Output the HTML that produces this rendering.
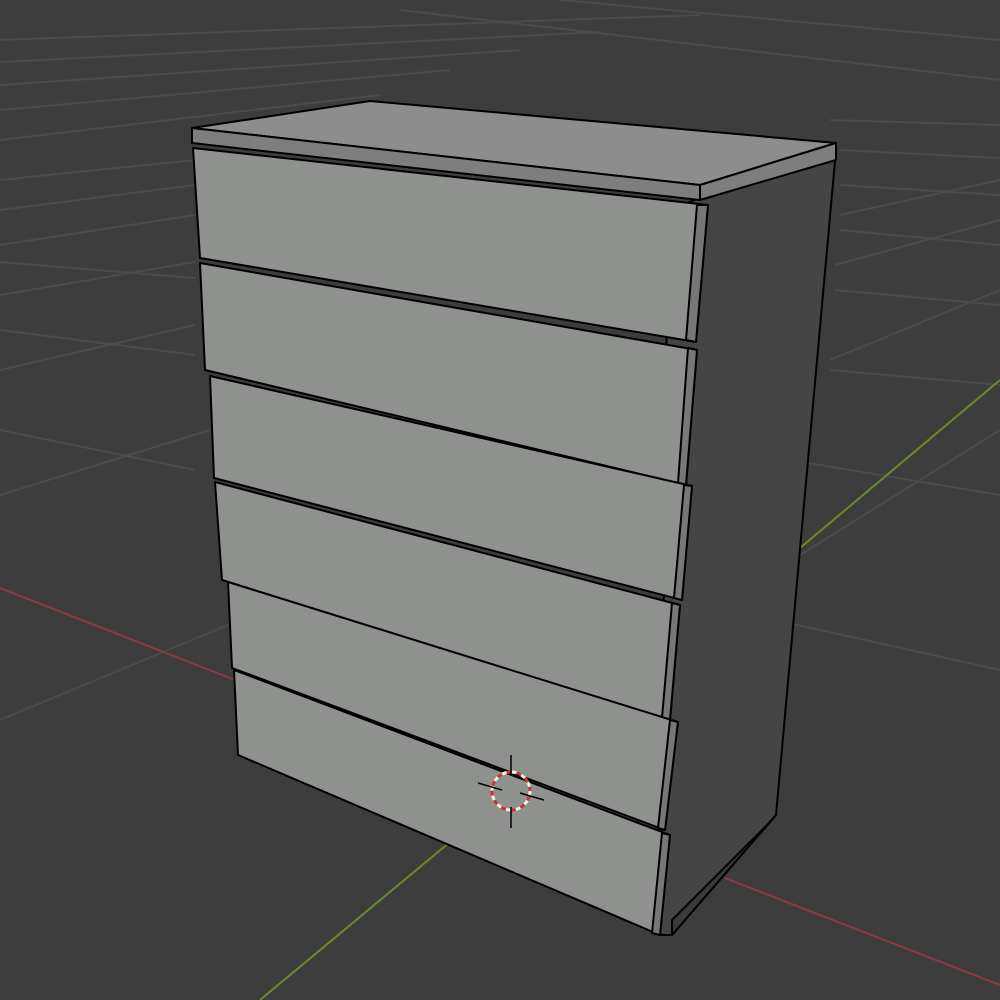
<!DOCTYPE html>
<html><head><style>html,body{margin:0;padding:0;background:#3d3d3d;}svg{display:block}</style></head>
<body>
<svg width="1000" height="1000" viewBox="0 0 1000 1000" xmlns="http://www.w3.org/2000/svg">
<rect width="1000" height="1000" fill="#3d3d3d"/>
<g stroke="#4b4b4b" stroke-width="2" fill="none">
<line x1="0" y1="720" x2="240" y2="620"/>
<line x1="0" y1="495" x2="210" y2="430"/>
<line x1="0" y1="370" x2="195" y2="325"/>
<line x1="0" y1="295" x2="195" y2="262"/>
<line x1="0" y1="245" x2="195" y2="215"/>
<line x1="0" y1="210" x2="195" y2="185"/>
<line x1="0" y1="180" x2="195" y2="160"/>
<line x1="0" y1="140" x2="380" y2="95"/>
<line x1="0" y1="110" x2="450" y2="70"/>
<line x1="0" y1="85" x2="520" y2="50"/>
<line x1="0" y1="62" x2="600" y2="32"/>
<line x1="0" y1="40" x2="700" y2="15"/>
<line x1="800" y1="555" x2="1000" y2="430"/>
<line x1="830" y1="360" x2="1000" y2="290"/>
<line x1="835" y1="265" x2="1000" y2="220"/>
<line x1="840" y1="215" x2="1000" y2="180"/>
<line x1="0" y1="430" x2="195" y2="470"/>
<line x1="0" y1="330" x2="195" y2="355"/>
<line x1="0" y1="262" x2="195" y2="278"/>
<line x1="775" y1="620" x2="1000" y2="670"/>
<line x1="790" y1="460" x2="1000" y2="495"/>
<line x1="830" y1="370" x2="1000" y2="385"/>
<line x1="835" y1="290" x2="1000" y2="305"/>
<line x1="840" y1="230" x2="1000" y2="245"/>
<line x1="840" y1="185" x2="1000" y2="195"/>
<line x1="840" y1="150" x2="1000" y2="158"/>
<line x1="560" y1="0" x2="1000" y2="40"/>
<line x1="400" y1="10" x2="1000" y2="80"/>
<line x1="830" y1="120" x2="1000" y2="125"/>
</g>
<line x1="0" y1="588" x2="235" y2="680" stroke="#8a3b42" stroke-width="2"/>
<line x1="725" y1="878" x2="1000" y2="985" stroke="#8a3b42" stroke-width="2"/>
<line x1="260" y1="1000" x2="450" y2="842" stroke="#6a8a2a" stroke-width="2"/>
<line x1="800" y1="548" x2="1000" y2="380" stroke="#6a8a2a" stroke-width="2"/>
<g stroke="#000" stroke-width="2" stroke-linejoin="round">
<!-- right side -->
<polygon points="700,198 836,150 776,815 672,935 660,935 668,210" fill="#454545"/>
<polygon points="776,815 672,935 672,920 770,822" fill="#3a3a3a"/>
<!-- top -->
<polygon points="192,128 370,101 836,143 700,185" fill="#8c8d8c"/>
<polygon points="192,128 700,185 836,143 836,160 700,200 192,143" fill="#7d7e7d"/>
<line x1="700" y1="185" x2="700" y2="200"/>
<!-- drawers -->
<polygon points="193,148 708,205 696,342 200,258" fill="#8f918f"/>
<polygon points="708,205 697,205 686,340 696,342" fill="#777"/>
<polygon points="200,263 697,350 686,485 205,370" fill="#8f918f"/>
<polygon points="697,350 688,348 678,483 686,485" fill="#777"/>
<polygon points="210,376 692,486 682,600 214,478" fill="#8f918f"/>
<polygon points="692,486 684,485 674,598 682,600" fill="#777"/>
<polygon points="215,482 680,605 670,720 222,580" fill="#8f918f"/>
<polygon points="680,605 672,603 662,718 670,720" fill="#777"/>
<polygon points="228,582 678,722 665,830 232,668" fill="#8f918f"/>
<polygon points="678,722 670,720 658,828 665,830" fill="#777"/>
<polygon points="234,670 670,835 660,935 238,755" fill="#8f918f"/>
<polygon points="670,835 662,833 652,933 660,935" fill="#777"/>
</g>
<!-- 3D cursor -->
<circle cx="511" cy="791" r="19" fill="none" stroke="#eee" stroke-width="3" stroke-dasharray="5 5"/>
<circle cx="511" cy="791" r="19" fill="none" stroke="#c23a30" stroke-width="3" stroke-dasharray="5 5" stroke-dashoffset="5"/>
<g stroke="#000" stroke-width="1.5">
<line x1="511" y1="755" x2="511" y2="775"/><line x1="511" y1="807" x2="511" y2="828"/>
<line x1="478" y1="783" x2="502" y2="790"/><line x1="520" y1="793" x2="544" y2="800"/>
</g>
</svg>
</body></html>
